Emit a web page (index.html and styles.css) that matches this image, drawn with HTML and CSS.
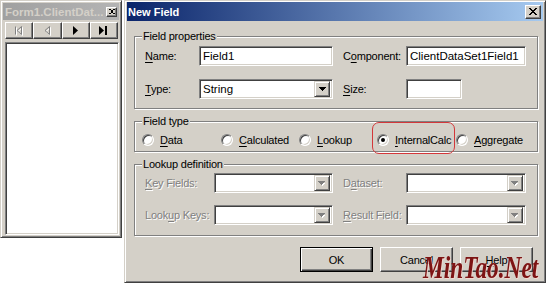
FILE: index.html
```html
<!DOCTYPE html>
<html lang="en">
<head>
    <meta charset="UTF-8">
    <title>New Field</title>
    <link rel="stylesheet" href="styles.css">
</head>
<body>
<div class="desktop">
    <div class="tool-window">
        <div class="caption inactive">
            <span class="caption-text">Form1.ClientDat...</span>
            <span class="cap-btn small">
                <svg width="6" height="5" viewBox="0 0 8 7" shape-rendering="crispEdges"><path d="M0 0h2v1H0zM6 0h2v1H6zM1 1h2v1H1zM5 1h2v1H5zM2 2h4v1H2zM3 3h2v1H3zM2 4h4v1H2zM1 5h2v1H1zM5 5h2v1H5zM0 6h2v1H0zM6 6h2v1H6z"/></svg>
            </span>
        </div>
        <div class="navigator">
            <span class="nav-btn">
                <svg width="10" height="10" viewBox="0 0 10 10">
                    <g class="emboss" transform="translate(1 1)"><path d="M1.5 0.5v8M7.5 0.5L3 4.5L7.5 8.5Z"/></g>
                    <g class="grayed"><path d="M1.5 0.5v8M7.5 0.5L3 4.5L7.5 8.5Z"/></g>
                </svg>
            </span>
            <span class="nav-btn">
                <svg width="9" height="10" viewBox="0 0 9 10">
                    <g class="emboss" transform="translate(1 1)"><path d="M6.5 0.5L2 4.5L6.5 8.5Z"/></g>
                    <g class="grayed"><path d="M6.5 0.5L2 4.5L6.5 8.5Z"/></g>
                </svg>
            </span>
            <span class="nav-btn">
                <svg width="9" height="9" viewBox="0 0 9 9"><path d="M2 0L7 4.5L2 9Z"/></svg>
            </span>
            <span class="nav-btn">
                <svg width="9" height="9" viewBox="0 0 9 9"><path d="M0 0L5 4.5L0 9Z"/><rect x="6" y="0" width="2" height="9"/></svg>
            </span>
        </div>
        <div class="grid"></div>
    </div>

    <div class="dialog">
        <div class="caption active">
            <span class="caption-text">New Field</span>
            <span class="cap-btn">
                <svg width="8" height="7" viewBox="0 0 8 7" shape-rendering="crispEdges"><path d="M0 0h2v1H0zM6 0h2v1H6zM1 1h2v1H1zM5 1h2v1H5zM2 2h4v1H2zM3 3h2v1H3zM2 4h4v1H2zM1 5h2v1H1zM5 5h2v1H5zM0 6h2v1H0zM6 6h2v1H6z"/></svg>
            </span>
        </div>

        <fieldset class="group">
            <legend>Field properties</legend>
            <div class="form-grid props">
                <span class="label"><u>N</u>ame:</span>
                <span class="edit wide">Field1</span>
                <span class="label">C<u>o</u>mponent:</span>
                <span class="edit comp">ClientDataSet1Field1</span>

                <span class="label"><u>T</u>ype:</span>
                <span class="edit combo wide">
                    <span class="combo-text">String</span>
                    <span class="drop-btn"><svg width="7" height="4" viewBox="0 0 7 4" shape-rendering="crispEdges"><path d="M0 0h7v1H0zM1 1h5v1H1zM2 2h3v1H2zM3 3h1v1H3z"/></svg></span>
                </span>
                <span class="label"><u>S</u>ize:</span>
                <span class="edit small-edit"></span>
            </div>
        </fieldset>

        <fieldset class="group">
            <legend>Field type</legend>
            <div class="radio-row">
                <span class="radio-item w79"><span class="radio-mark"></span><span><u>D</u>ata</span></span>
                <span class="radio-item w78"><span class="radio-mark"></span><span><u>C</u>alculated</span></span>
                <span class="radio-item w78"><span class="radio-mark"></span><span><u>L</u>ookup</span></span>
                <span class="radio-item w79 marked"><span class="radio-mark checked"></span><span><u>I</u>nternalCalc</span></span>
                <span class="radio-item"><span class="radio-mark"></span><span><u>A</u>ggregate</span></span>
            </div>
        </fieldset>

        <fieldset class="group disabled">
            <legend>Lookup definition</legend>
            <div class="form-grid lookup">
                <span class="label"><u>K</u>ey Fields:</span>
                <span class="edit combo mid">
                    <span class="combo-text"></span>
                    <span class="drop-btn"><svg width="8" height="5" viewBox="0 0 8 5" shape-rendering="crispEdges"><path class="arrow-shadow" d="M2 2h5v1H2zM3 3h3v1H3zM4 4h1v1H4z"/><path class="arrow-gray" d="M0 0h7v1H0zM1 1h5v1H1zM2 2h3v1H2zM3 3h1v1H3z"/></svg></span>
                </span>
                <span class="label">D<u>a</u>taset:</span>
                <span class="edit combo comp">
                    <span class="combo-text"></span>
                    <span class="drop-btn"><svg width="8" height="5" viewBox="0 0 8 5" shape-rendering="crispEdges"><path class="arrow-shadow" d="M2 2h5v1H2zM3 3h3v1H3zM4 4h1v1H4z"/><path class="arrow-gray" d="M0 0h7v1H0zM1 1h5v1H1zM2 2h3v1H2zM3 3h1v1H3z"/></svg></span>
                </span>

                <span class="label">Look<u>u</u>p Keys:</span>
                <span class="edit combo mid">
                    <span class="combo-text"></span>
                    <span class="drop-btn"><svg width="8" height="5" viewBox="0 0 8 5" shape-rendering="crispEdges"><path class="arrow-shadow" d="M2 2h5v1H2zM3 3h3v1H3zM4 4h1v1H4z"/><path class="arrow-gray" d="M0 0h7v1H0zM1 1h5v1H1zM2 2h3v1H2zM3 3h1v1H3z"/></svg></span>
                </span>
                <span class="label"><u>R</u>esult Field:</span>
                <span class="edit combo comp">
                    <span class="combo-text"></span>
                    <span class="drop-btn"><svg width="8" height="5" viewBox="0 0 8 5" shape-rendering="crispEdges"><path class="arrow-shadow" d="M2 2h5v1H2zM3 3h3v1H3zM4 4h1v1H4z"/><path class="arrow-gray" d="M0 0h7v1H0zM1 1h5v1H1zM2 2h3v1H2zM3 3h1v1H3z"/></svg></span>
                </span>
            </div>
        </fieldset>

        <div class="buttons">
            <span class="push default">OK</span>
            <span class="push">Cancel</span>
            <span class="push"><u>H</u>elp</span>
        </div>
    </div>

    <div class="watermark">MinTao.Net</div>
</div>
</body>
</html>
```

FILE: styles.css
```css
* {
    box-sizing: border-box;
}
body {
    margin: 0;
    background: #fff;
    font-family: "Liberation Sans", Arial, sans-serif;
    font-size: 11px;
    letter-spacing: -0.2px;
    color: #000;
}
u {
    text-decoration-thickness: 1px;
    text-underline-offset: 2px;
}
.desktop {
    position: relative;
    display: flex;
    align-items: flex-start;
    width: 546px;
    height: 283px;
    overflow: hidden;
}

/* window frames */
.tool-window,
.dialog {
    background: #d4d0c8;
    border: 1px solid;
    border-color: #d4d0c8 #404040 #404040 #d4d0c8;
    box-shadow: inset 1px 1px 0 #fff, inset -1px -1px 0 #808080;
    display: flex;
    flex-direction: column;
}
.tool-window {
    width: 122px;
    height: 238px;
    padding: 2px;
}
.dialog {
    width: 422px;
    height: 283px;
    margin-left: 2px;
    padding: 1px 2px 2px;
}

/* caption bars */
.caption {
    display: flex;
    align-items: center;
    justify-content: space-between;
    font-weight: bold;
    letter-spacing: 0;
    white-space: nowrap;
}
.caption.inactive {
    height: 17px;
    padding: 0 2px;
    background: linear-gradient(to right, #a0a0a0, #b4b4b4);
    color: #d4d0c8;
    font-size: 11.5px;
}
.caption.active {
    height: 19px;
    padding: 0 2px 0 1px;
    background: linear-gradient(to right, #0a246a, #a6caf0);
    color: #fff;
    font-size: 11px;
}
.cap-btn {
    width: 16px;
    height: 14px;
    display: flex;
    align-items: center;
    justify-content: center;
    background: #d4d0c8;
    border: 1px solid;
    border-color: #fff #404040 #404040 #fff;
    box-shadow: inset -1px -1px 0 #808080;
}
.cap-btn.small {
    width: 11px;
    height: 10px;
}

/* data navigator + grid */
.navigator {
    display: flex;
    height: 17px;
    margin: 2px 1px 0 2px;
}
.nav-btn {
    flex: 1;
    display: flex;
    align-items: center;
    justify-content: center;
    background: #d4d0c8;
    border: 1px solid;
    border-color: #fff #404040 #404040 #fff;
    box-shadow: inset -1px -1px 0 #808080;
}
.grayed path {
    fill: none;
    stroke: #808080;
}
.emboss path {
    fill: none;
    stroke: #fff;
}
.grid {
    flex: 1;
    margin: 3px 0 0 2px;
    background: #fff;
    border: 1px solid;
    border-color: #808080 #fff #fff #808080;
    box-shadow: inset 1px 1px 0 #404040, inset -1px -1px 0 #d4d0c8;
}

/* group boxes */
.group {
    margin: 0 5px 0 7px;
    padding: 0;
    border: 1px solid #808080;
    box-shadow: inset 1px 1px 0 #fff, 1px 1px 0 #fff;
    min-width: 0;
}
.group:first-of-type {
    margin-top: 9px;
}
.group + .group {
    margin-top: 6px;
}
.group legend {
    margin-left: 7px;
    padding: 0 1px;
    line-height: 13px;
    background: #d4d0c8;
}

.form-grid {
    display: grid;
    grid-auto-rows: 20px;
    align-items: center;
}
.form-grid.props {
    grid-template-columns: 54px 144px 63px 120px;
    row-gap: 13px;
    padding: 3px 0 9px 10px;
}
.form-grid.lookup {
    grid-template-columns: 69px 129px 63px 120px;
    row-gap: 12px;
    padding: 2px 0 10px 10px;
}
.label {
    white-space: nowrap;
}
.disabled .label {
    color: #808080;
    text-shadow: 1px 1px 0 #fff;
}

/* edits and combos */
.edit {
    height: 20px;
    display: flex;
    align-items: center;
    padding: 2px 2px 2px 3px;
    background: #fff;
    border: 1px solid;
    border-color: #808080 #fff #fff #808080;
    box-shadow: inset 1px 1px 0 #404040, inset -1px -1px 0 #d4d0c8;
    white-space: nowrap;
    font-size: 11.5px;
    letter-spacing: 0;
}
.edit.wide {
    width: 134px;
}
.edit.mid {
    width: 119px;
}
.edit.comp {
    width: 120px;
}
.edit.small-edit {
    width: 56px;
}
.combo {
    padding-right: 2px;
}
.combo-text {
    flex: 1;
}
.drop-btn {
    width: 16px;
    height: 16px;
    display: flex;
    align-items: center;
    justify-content: center;
    background: #d4d0c8;
    border: 1px solid;
    border-color: #d4d0c8 #404040 #404040 #d4d0c8;
    box-shadow: inset 1px 1px 0 #fff, inset -1px -1px 0 #808080;
}
.arrow-gray {
    fill: #808080;
}
.arrow-shadow {
    fill: #fff;
}

/* radios */
.radio-row {
    display: flex;
    height: 23px;
    padding: 5px 0 5px 7px;
}
.radio-item {
    display: flex;
    align-items: center;
    gap: 6px;
    height: 13px;
    white-space: nowrap;
}
.w79 {
    width: 79px;
}
.w78 {
    width: 78px;
}
.radio-mark {
    width: 12px;
    height: 12px;
    flex: none;
    display: flex;
    align-items: center;
    justify-content: center;
    border-radius: 50%;
    background: #fff;
    border: 1px solid;
    border-color: #808080 #fff #fff #808080;
    box-shadow: inset 1px 1px 0 #404040, inset -1px -1px 0 #d4d0c8;
}
.radio-mark.checked::after {
    content: "";
    width: 4px;
    height: 4px;
    border-radius: 50%;
    background: #000;
}
.marked {
    position: relative;
}
.marked::after {
    content: "";
    position: absolute;
    left: -5px;
    top: -11px;
    width: 81px;
    height: 30px;
    border: 1px solid #d3373a;
    border-radius: 7px;
}

/* push buttons */
.buttons {
    display: flex;
    justify-content: flex-end;
    gap: 7px;
    margin: 11px 10px 0 0;
}
.push {
    width: 73px;
    height: 25px;
    display: flex;
    align-items: center;
    justify-content: center;
    background: #d4d0c8;
    border: 1px solid;
    border-color: #fff #404040 #404040 #fff;
    box-shadow: inset -1px -1px 0 #808080;
}
.push.default {
    border-color: #000;
    box-shadow: inset 1px 1px 0 #fff, inset -1px -1px 0 #404040, inset -2px -2px 0 #808080;
}

/* watermark stamped on the screenshot */
.watermark {
    position: absolute;
    left: 423px;
    top: 251px;
    font-family: "Liberation Serif", serif;
    font-style: italic;
    font-weight: bold;
    font-size: 32px;
    line-height: 32px;
    letter-spacing: 0;
    color: #7d1414;
    text-shadow: 1px 1px 0 #f3d8d0;
    transform: scaleX(0.73);
    transform-origin: left top;
    white-space: nowrap;
}
```
